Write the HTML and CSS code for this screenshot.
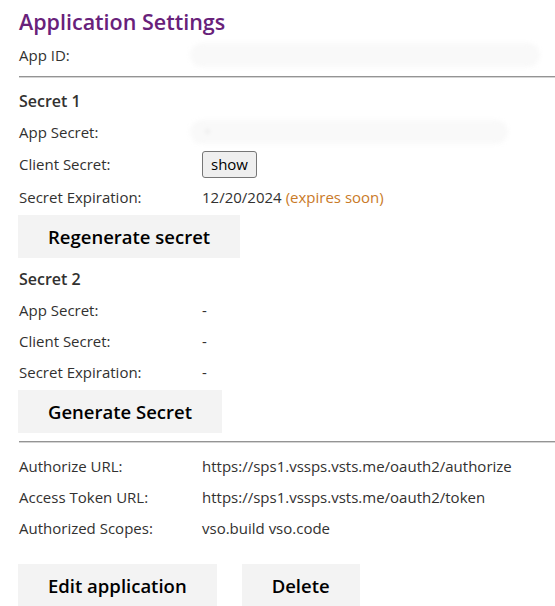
FILE: index.html
```html
<!DOCTYPE html>
<html>
<head>
<meta charset="utf-8">
<link rel="stylesheet" href="styles.css">
</head>
<body>
<div class="page">
  <h1 class="title">Application Settings</h1>
  <div class="row row-appid">
    <span class="label">App ID:</span>
    <span class="value"><span class="blur blur-id"></span></span>
  </div>
  <div class="rule rule-top"></div>

  <h2 class="sub sub-1">Secret 1</h2>
  <div class="row">
    <span class="label">App Secret:</span>
    <span class="value"><span class="blur blur-secret"><span class="dot"></span></span></span>
  </div>
  <div class="row row-btn">
    <span class="label">Client Secret:</span>
    <span class="value"><button class="show">show</button></span>
  </div>
  <div class="row">
    <span class="label">Secret Expiration:</span>
    <span class="value">12/20/2024 <span class="soon">(expires soon)</span></span>
  </div>
  <div class="actions actions-1">
    <button class="big">Regenerate secret</button>
  </div>

  <h2 class="sub sub-2">Secret 2</h2>
  <div class="group-2">
    <div class="row">
      <span class="label">App Secret:</span>
      <span class="value">-</span>
    </div>
    <div class="row">
      <span class="label">Client Secret:</span>
      <span class="value">-</span>
    </div>
    <div class="row">
      <span class="label">Secret Expiration:</span>
      <span class="value">-</span>
    </div>
  </div>
  <div class="actions actions-2">
    <button class="big">Generate Secret</button>
  </div>
  <div class="rule rule-mid"></div>

  <div class="group-3">
    <div class="row">
      <span class="label">Authorize URL:</span>
      <span class="value">https://sps1.vssps.vsts.me/oauth2/authorize</span>
    </div>
    <div class="row">
      <span class="label">Access Token URL:</span>
      <span class="value">https://sps1.vssps.vsts.me/oauth2/token</span>
    </div>
    <div class="row">
      <span class="label">Authorized Scopes:</span>
      <span class="value">vso.build vso.code</span>
    </div>
  </div>
  <div class="actions actions-3">
    <button class="big">Edit application</button>
    <button class="big">Delete</button>
  </div>
</div>
</body>
</html>
```
FILE: styles.css
```css
html, body {
  margin: 0;
  padding: 0;
  background: #ffffff;
}
body {
  font-family: "Open Sans", "Noto Sans", sans-serif;
  color: #323130;
  font-size: 15px;
  overflow: hidden;
}
.page {
  padding: 7px 0 0 19px;
  display: flex;
  flex-direction: column;
}
.title {
  margin: 0;
  font-size: 21.5px;
  line-height: 30px;
  font-weight: 600;
  color: #68217a;
}
.row {
  display: grid;
  grid-template-columns: 183px 1fr;
  align-items: center;
  height: 31px;
}
.row-appid {
  margin-top: 3px;
  height: 30px;
}
.row-btn {
  height: 34px;
}
.label, .value {
  line-height: 20px;
}
.value {
  display: flex;
  align-items: center;
  white-space: nowrap;
}
.blur {
  display: block;
  height: 24px;
  border-radius: 12px;
  background: #f9f9f9;
  filter: blur(2px);
  margin-left: -12px;
  position: relative;
}
.blur-id { width: 350px; }
.blur-secret { width: 318px; }
.dot {
  position: absolute;
  left: 16px;
  top: 10px;
  width: 3px;
  height: 3px;
  border-radius: 50%;
  background: #d8d8d8;
}
.rule {
  height: 0;
  border-top: 1px solid #949494;
  border-bottom: 1px solid #d4d4d4;
}
.rule-top { margin-top: 6px; }
.rule-mid { margin-top: 8px; }
.sub {
  margin: 0;
  font-size: 16px;
  line-height: 22px;
  font-weight: 600;
  color: #323130;
}
.sub-1 { margin-top: 12px; margin-bottom: 4px; }
.sub-2 { margin-top: 10px; }
.group-2 { margin-top: 4px; }
.group-3 { margin-top: 7px; }
.show {
  font-family: "Open Sans", "Noto Sans", sans-serif;
  font-size: 15px;
  color: #000;
  background: #efefef;
  border: 1px solid #767676;
  border-radius: 3px;
  height: 27px;
  padding: 0 8px;
  margin-top: 0;
}
.soon {
  color: #c97a28;
  margin-left: 4px;
}
.actions {
  display: flex;
  gap: 25px;
}
.actions-1 { margin-top: 3px; }
.actions-2 { margin-top: 3px; }
.actions-3 { margin-top: 21px; }
.big {
  font-family: "Open Sans", "Noto Sans", sans-serif;
  font-size: 18.5px;
  font-weight: 600;
  color: #000;
  background: #f3f3f3;
  border: none;
  border-radius: 0;
  height: 43px;
  padding: 0 30px;
  margin-left: -1px;
}
.actions-3 .big + .big { margin-left: 0; }
```
